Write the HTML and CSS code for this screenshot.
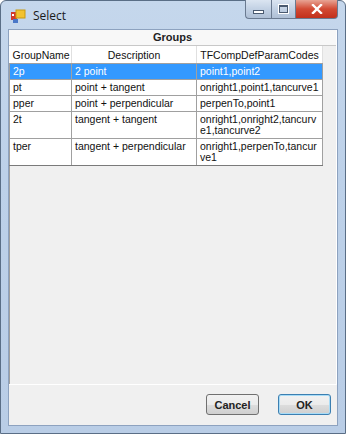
FILE: index.html
```html
<!DOCTYPE html>
<html lang="en">

<head>
    <meta charset="UTF-8">
    <title>Select</title>
    <link rel="stylesheet" href="styles.css">
</head>

<body>
    <div class="window">
        <div class="titlebar">
            <svg class="app_icon" width="16" height="16" viewBox="0 0 16 16">
                <rect x="1" y="4" width="6" height="8" fill="#d23a2a" />
                <rect x="6" y="2" width="9" height="8" fill="#f2c230" stroke="#c89a10" stroke-width="1" />
                <rect x="3" y="11" width="5" height="4" fill="#4a78c8" />
                <rect x="2" y="6" width="2" height="2" fill="#fff" />
            </svg>
            <span class="title">Select</span>
            <div class="controls">
                <div class="ctl ctl_min"><span class="min_glyph"></span></div>
                <div class="ctl ctl_max"><span class="max_glyph"></span></div>
                <div class="ctl ctl_close">
                    <svg width="12" height="10" viewBox="0 0 12 10">
                        <path d="M2 1 L10 9 M10 1 L2 9" stroke="#fff" stroke-width="2.4" stroke-linecap="square" />
                    </svg>
                </div>
            </div>
        </div>

        <div class="client">
            <div class="grid">
                <div class="caption">Groups</div>
                <table class="groups">
                    <colgroup>
                        <col class="col_name">
                        <col class="col_desc">
                        <col class="col_codes">
                    </colgroup>
                    <thead>
                        <tr>
                            <th class="th_left">GroupName</th>
                            <th>Description</th>
                            <th>TFCompDefParamCodes</th>
                        </tr>
                    </thead>
                    <tbody>
                        <tr class="selected">
                            <td>2p</td>
                            <td>2 point</td>
                            <td>point1,point2</td>
                        </tr>
                        <tr>
                            <td>pt</td>
                            <td>point + tangent</td>
                            <td>onright1,point1,tancurve1</td>
                        </tr>
                        <tr>
                            <td>pper</td>
                            <td>point + perpendicular</td>
                            <td>perpenTo,point1</td>
                        </tr>
                        <tr>
                            <td>2t</td>
                            <td>tangent + tangent</td>
                            <td>onright1,onright2,tancurv<br>e1,tancurve2</td>
                        </tr>
                        <tr>
                            <td>tper</td>
                            <td>tangent + perpendicular</td>
                            <td>onright1,perpenTo,tancur<br>ve1</td>
                        </tr>
                    </tbody>
                </table>
            </div>
            <div class="buttons">
                <button type="button" class="btn">Cancel</button>
                <button type="button" class="btn btn_default">OK</button>
            </div>
        </div>
    </div>
</body>

</html>
```

FILE: styles.css
```css
body {
    margin: 0;
    font-family: "Liberation Sans", Arial, sans-serif;
}

.window {
    width: 346px;
    height: 434px;
    box-sizing: border-box;
    display: flex;
    flex-direction: column;
    padding: 0 7px 7px 7px;
    background: linear-gradient(to bottom, #c5d7ec 0%, #bdd1e9 40%, #b9cde6 100%);
    border: 1px solid #5a6e86;
    border-radius: 6px 6px 0 0;
}

.titlebar {
    height: 28px;
    display: flex;
    align-items: flex-start;
    flex-shrink: 0;
}

.app_icon {
    margin-top: 7px;
    margin-left: 2px;
}

.title {
    margin-top: 6px;
    margin-left: 7px;
    font-family: "Open Sans", "Liberation Sans", sans-serif;
    font-size: 12px;
    color: #1a1a1a;
}

.controls {
    margin-left: auto;
    display: flex;
    height: 19px;
    margin-top: -1px;
}

.ctl {
    height: 18px;
    display: flex;
    align-items: center;
    justify-content: center;
    border: 1px solid #6a7a90;
    border-top: none;
}

.ctl_min {
    width: 25px;
    border-radius: 0 0 0 4px;
    border-right: none;
    background: linear-gradient(to bottom, #dbe5f1 0%, #c2d1e4 50%, #aebfd5 100%);
}

.ctl_max {
    width: 23px;
    background: linear-gradient(to bottom, #dbe5f1 0%, #c2d1e4 50%, #aebfd5 100%);
}

.ctl_close {
    width: 41px;
    border-left: none;
    border-radius: 0 0 4px 0;
    background: linear-gradient(to bottom, #e8a494 0%, #d24a33 50%, #c2301c 100%);
}

.min_glyph {
    width: 9px;
    height: 2px;
    margin-top: 5px;
    background: #fff;
    border: 1px solid #4a5a70;
}

.max_glyph {
    width: 7px;
    height: 5px;
    border: 1px solid #4a5a70;
    border-top-width: 2px;
    box-shadow: 0 0 0 1px #fff;
}

.client {
    flex: 1;
    display: flex;
    flex-direction: column;
    background-color: #f0f0f0;
    border: 1px solid #8da2bf;
}

.grid {
    height: 354px;
    background-color: #f0f0f0;
    border-right: 1px solid #fff;
    border-bottom: 1px solid #fff;
    box-shadow: inset 1px 0 0 #a0a0a0;
}

.caption {
    height: 15px;
    line-height: 15px;
    text-align: center;
    font-size: 11px;
    font-weight: bold;
    color: #222;
    background-color: #f8f8f8;
    border-bottom: 1px solid #c8c8c8;
}

.groups {
    table-layout: fixed;
    width: 313px;
    border-collapse: collapse;
    font-size: 10.5px;
    color: #111;
    background-color: #fff;
}

.col_name {
    width: 62px;
}

.col_desc {
    width: 125px;
}

.col_codes {
    width: 126px;
}

.groups th {
    height: 17px;
    padding: 0 3px;
    font-weight: normal;
    text-align: center;
    white-space: nowrap;
    background-color: #fff;
    border-right: 1px solid #e0e0e0;
    border-bottom: 1px solid #a0a0a0;
}

.groups th.th_left {
    text-align: left;
}

.groups td {
    padding: 2px 3px 2px 3px;
    line-height: 11px;
    vertical-align: top;
    white-space: nowrap;
    overflow: hidden;
    border: 1px solid #a0a0a0;
    border-left: none;
}

.groups td:first-child {
    border-left: 1px solid #a0a0a0;
}

.groups tbody tr:last-child td {
    border-bottom: 1px solid #7a7a7a;
}

.groups tr.selected td {
    background-color: #3399ff;
    color: #fff;
}

.buttons {
    display: flex;
    justify-content: flex-end;
    gap: 19px;
    padding: 9px 6px 0 0;
}

.btn {
    width: 53px;
    height: 21px;
    padding: 0;
    font-family: "Liberation Sans", Arial, sans-serif;
    font-size: 11px;
    font-weight: bold;
    color: #222;
    border: 1px solid #707070;
    border-radius: 3px;
    background: linear-gradient(to bottom, #f2f2f2 0%, #ebebeb 50%, #dddddd 51%, #cfcfcf 100%);
}

.btn_default {
    border-color: #3c7fb1;
    box-shadow: inset 0 0 0 1px #a8dcf7;
}
```
